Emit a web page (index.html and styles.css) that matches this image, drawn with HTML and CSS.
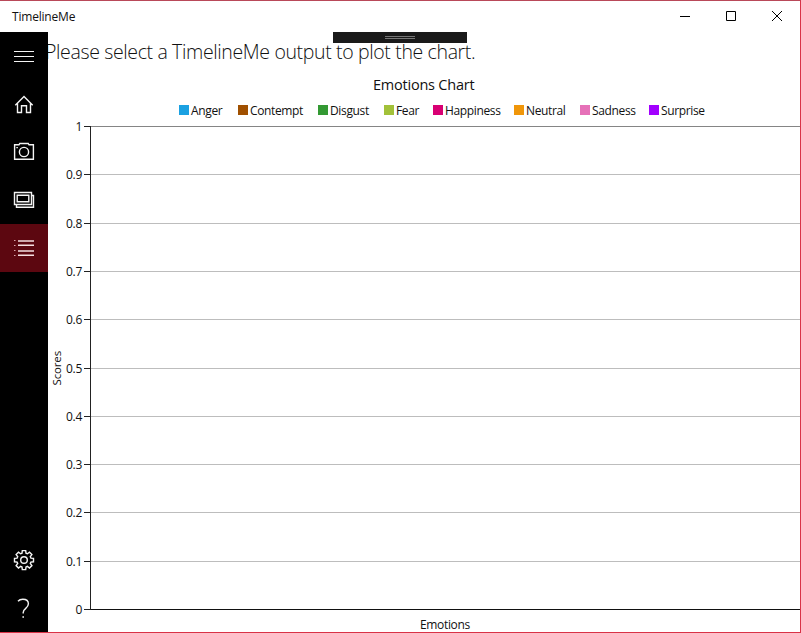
FILE: index.html
```
<!DOCTYPE html>
<html lang="en">
<head>
<meta charset="utf-8">
<title>TimelineMe</title>
<link rel="stylesheet" href="styles.css">
</head>
<body>
<div class="window">
  <header class="titlebar">
    <span class="app-name">TimelineMe</span>
    <div class="controls">
      <svg viewBox="0 0 46 31"><path d="M18 15.5h10"/></svg>
      <svg viewBox="0 0 46 31"><path d="M18.5 10.5h9v9h-9z"/></svg>
      <svg viewBox="0 0 46 31"><path d="M18 10l10 10M28 10l-10 10"/></svg>
    </div>
  </header>
  <div class="body">
    <nav class="sidebar">
      <div class="nav-item"><svg viewBox="0 0 48 48"><path class="crisp" d="M14 19.5h20M14 24.5h20M14 29.5h20"/></svg></div>
      <div class="nav-item"><svg viewBox="0 0 48 48"><path d="M15.3 25.2L24 16.5l8.7 8.7M17.5 23.5v9h4v-6.7h5v6.7h4v-9"/></svg></div>
      <div class="nav-item"><svg viewBox="0 0 48 48"><path d="M14.6 16.8h4.4l.8-1.3h8.4l.8 1.3h4.4v14.5H14.6z"/><circle cx="24" cy="24" r="4.6"/><path d="M16.3 19.6h1.6"/></svg></div>
      <div class="nav-item"><svg viewBox="0 0 48 48"><path d="M14.5 16.5h17v12h-17zM17.2 19.2h11.6v6.6H17.2zM31.5 19.5h2v11.8h-17v-2.5"/></svg></div>
      <div class="nav-item active"><svg viewBox="0 0 48 48"><path d="M18 17h16M18 21.3h16M18 27h16M18 31.3h16"/><path class="dots" d="M14 16.5h1.5M14 21.5h1.5M14 26.5h1.5M14 31.5h1.5"/></svg></div>
      <div class="nav-item settings"><svg viewBox="0 0 48 48"><path d="M22 17.2 22.3 14.6h3.4l.3 2.6 1.4.6 2.1-1.6 2.4 2.4-1.6 2.1.6 1.4 2.6.3v3.4l-2.6.3-.6 1.4 1.6 2.1-2.4 2.4-2.1-1.6-1.4.6-.3 2.6h-3.4l-.3-2.6-1.4-.6-2.1 1.6-2.4-2.4 1.6-2.1-.6-1.4-2.6-.3v-3.4l2.6-.3.6-1.4-1.6-2.1 2.4-2.4 2.1 1.6z"/><circle cx="24" cy="24" r="3.3"/></svg></div>
      <div class="nav-item"><svg viewBox="0 0 48 48"><path d="M18 17.2c1.2-1.4 2.8-2 4.8-2 3.3 0 5.6 1.8 5.6 4.6 0 4.7-5.2 4.4-5.2 8.8v1"/><path d="M22.4 33h1.6"/></svg></div>
    </nav>
    <main class="content">
      <h1 class="prompt">Please select a TimelineMe output to plot the chart.</h1>
      <section class="chart">
        <h2 class="chart-title">Emotions Chart</h2>
        <ul class="legend">
          <li class="anger">Anger</li>
          <li class="contempt">Contempt</li>
          <li class="disgust">Disgust</li>
          <li class="fear">Fear</li>
          <li class="happiness">Happiness</li>
          <li class="neutral">Neutral</li>
          <li class="sadness">Sadness</li>
          <li class="surprise">Surprise</li>
        </ul>
        <div class="plot">
          <div class="y-title"><span>Scores</span></div>
          <div class="y-axis">
            <span>1</span><span>0.9</span><span>0.8</span><span>0.7</span><span>0.6</span><span>0.5</span><span>0.4</span><span>0.3</span><span>0.2</span><span>0.1</span><span>0</span>
          </div>
          <div class="ticks"><i></i><i></i><i></i><i></i><i></i><i></i><i></i><i></i><i></i><i></i><i></i></div>
          <div class="area"><i></i><i></i><i></i><i></i><i></i><i></i><i></i><i></i><i></i><i></i><i></i></div>
        </div>
        <div class="x-title">Emotions</div>
      </section>
    </main>
  </div>
  <div class="debug-bar"><i></i><i></i></div>
</div>
</body>
</html>
```
FILE: styles.css
```
* { box-sizing: border-box; }
body { margin: 0; background: #fff; color: #111; font-family: "Open Sans", "Noto Sans", sans-serif; font-size: 12px; }
h1, h2, ul { margin: 0; padding: 0; font-weight: 400; }
i { display: block; }
.window { position: relative; width: 801px; height: 633px; display: flex; flex-direction: column; border: 1px solid #d93347; border-top-color: #b94959; border-left: 0; overflow: hidden; }
.titlebar { height: 31px; flex: none; display: flex; justify-content: space-between; }
.app-name { padding-left: 12px; line-height: 31px; font-size: 12px; letter-spacing: -.2px; }
.controls { display: flex; }
.controls svg { width: 46px; height: 31px; fill: none; stroke: #000; stroke-width: 1; }
.body { flex: 1; display: flex; min-height: 0; }
.sidebar { position: relative; z-index: 1; width: 48px; flex: none; display: flex; flex-direction: column; background: #000; }
.nav-item { height: 48px; }
.nav-item svg { display: block; width: 48px; height: 48px; fill: none; stroke: #f4f4f4; stroke-width: 1.4; }
.nav-item .crisp { stroke-width: 1; }
.active { background: #5c0710; }
.active svg { stroke: #f5dfe1; }
.active .dots { stroke-width: 1; stroke: #d9a5aa; }
.settings { margin-top: auto; }
.content { flex: 1; min-width: 0; }
.prompt { height: 42px; margin-left: -3px; font-size: 19.5px; font-weight: 300; line-height: 40px; letter-spacing: -.36px; white-space: nowrap; }
.chart-title { height: 22px; padding-left: 325px; font-size: 14.5px; line-height: 21px; letter-spacing: -.22px; white-space: nowrap; }
.legend { height: 30px; padding-left: 131px; display: grid; grid-template-columns: 59px 80px 66px 49px 81px 66px 69px 60px; list-style: none; line-height: 30px; letter-spacing: -.36px; }
.legend li { display: flex; align-items: flex-start; gap: 2px; white-space: nowrap; }
.legend li::before { content: ""; width: 10px; height: 10px; margin-top: 9px; flex: none; background: currentColor; }
.anger::before { color: #1ba1e2; }
.contempt::before { color: #a05000; }
.disgust::before { color: #339933; }
.fear::before { color: #a2c139; }
.happiness::before { color: #d80073; }
.neutral::before { color: #f09609; }
.sadness::before { color: #e671b8; }
.surprise::before { color: #a200ff; }
.plot { height: 484px; padding-top: .1px; display: grid; grid-template-columns: 17px 17px 8px 1fr; }
.y-title { display: flex; align-items: center; justify-content: center; }
.y-title span { writing-mode: vertical-rl; transform: rotate(180deg); font-size: 11.5px; line-height: 17px; letter-spacing: -.15px; }
.y-axis, .ticks, .area { display: grid; grid-template-rows: repeat(10, 48.3px) 1px; }
.y-axis span { height: 16px; margin-top: -8px; line-height: 17px; text-align: right; letter-spacing: -.25px; white-space: nowrap; direction: rtl; unicode-bidi: plaintext; }
.ticks { padding-left: 2px; }
.ticks i { border-top: 1px solid #222; }
.area { border-left: 1px solid #222; }
.area i { border-top: 1px solid #bdbdbd; }
.area i:first-child { border-color: #858585; }
.area i:last-child { border-color: #111; }
.x-title { padding-left: 372px; line-height: 29px; letter-spacing: -.34px; height: 22px; }
.debug-bar { position: absolute; left: 333px; top: 31px; width: 134px; height: 11px; display: flex; flex-direction: column; align-items: center; justify-content: center; gap: 1px; background: #1a1a1a; }
.debug-bar i { width: 30px; height: 1px; background: #777; }
```
